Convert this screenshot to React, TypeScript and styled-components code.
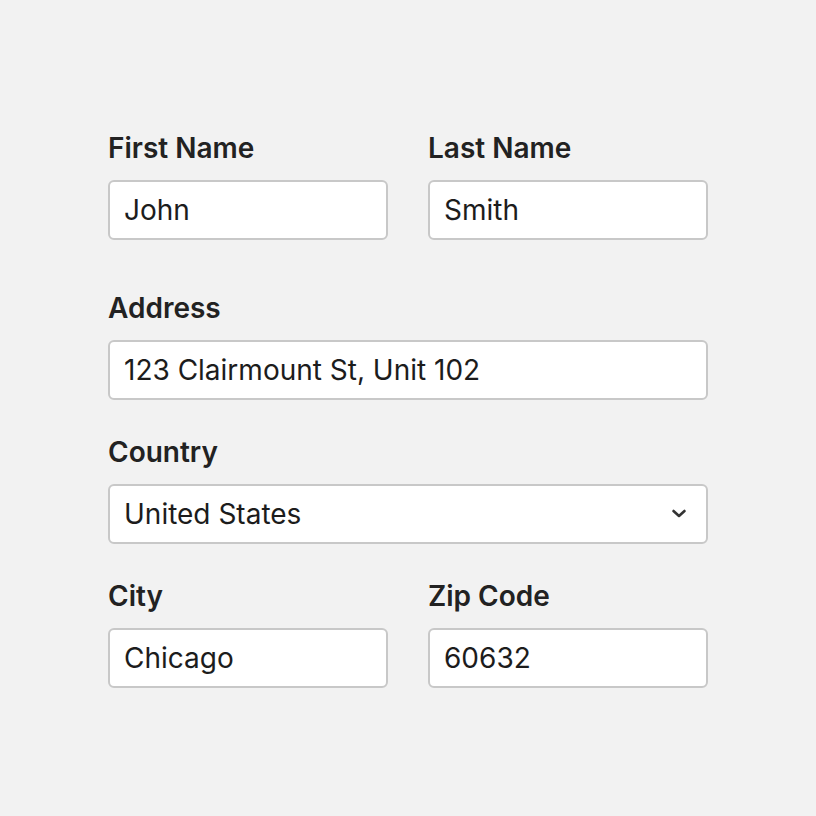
import React from "react";
import styled, { createGlobalStyle } from "styled-components";

const GlobalStyle = createGlobalStyle`
    html, body {
        margin: 0;
        padding: 0;
        background: #f2f2f2;
    }
    body {
        font-family: Inter, "Noto Sans", sans-serif;
        color: #1f1f1f;
    }
`

const Page = styled.div`
    width: 816px;
    height: 816px;
    box-sizing: border-box;
    padding: 132px 108px 0;
    background: #f2f2f2;
`

const Form = styled.form`
    width: 600px;
    display: flex;
    flex-direction: column;
    gap: 36px;
`

const Row = styled.div<{ $extra?: number }>`
    display: grid;
    grid-template-columns: 1fr 1fr;
    column-gap: 40px;
    margin-bottom: ${(p) => p.$extra || 0}px;
`

const Field = styled.div`
    display: flex;
    flex-direction: column;
    gap: 16px;
`

const Label = styled.label`
    font-size: 28px;
    line-height: 32px;
    font-weight: 600;
    color: #222;
`

const Input = styled.input`
    box-sizing: border-box;
    width: 100%;
    height: 60px;
    padding: 0 14px;
    border: 2px solid #c8c8c8;
    border-radius: 6px;
    background: #fff;
    font-family: Inter, "Noto Sans", sans-serif;
    font-size: 28px;
    color: #1c1c1c;
    outline: none;
`

const SelectWrap = styled.div`
    position: relative;
    height: 60px;
`

const Select = styled.select`
    box-sizing: border-box;
    width: 100%;
    height: 60px;
    padding: 0 14px;
    border: 2px solid #c8c8c8;
    border-radius: 6px;
    background: #fff;
    font-family: Inter, "Noto Sans", sans-serif;
    font-size: 28px;
    color: #1c1c1c;
    appearance: none;
    outline: none;
`

const Chevron = styled.svg`
    position: absolute;
    right: 21px;
    top: 24px;
    pointer-events: none;
`

function App() {
    return (
        <Page>
            <GlobalStyle />
            <Form>
                <Row $extra={16}>
                    <Field>
                        <Label>First Name</Label>
                        <Input defaultValue="John" />
                    </Field>
                    <Field>
                        <Label>Last Name</Label>
                        <Input defaultValue="Smith" />
                    </Field>
                </Row>
                <Field>
                    <Label>Address</Label>
                    <Input defaultValue="123 Clairmount St, Unit 102" />
                </Field>
                <Field>
                    <Label>Country</Label>
                    <SelectWrap>
                        <Select defaultValue="us">
                            <option value="us">United States</option>
                            <option value="ca">Canada</option>
                        </Select>
                        <Chevron width="16" height="11" viewBox="0 0 16 11">
                            <path d="M2.5 3 L8 8 L13.5 3" fill="none" stroke="#333" strokeWidth="2.6" strokeLinecap="round" strokeLinejoin="round" />
                        </Chevron>
                    </SelectWrap>
                </Field>
                <Row>
                    <Field>
                        <Label>City</Label>
                        <Input defaultValue="Chicago" />
                    </Field>
                    <Field>
                        <Label>Zip Code</Label>
                        <Input defaultValue="60632" />
                    </Field>
                </Row>
            </Form>
        </Page>
    )
}

export default App
